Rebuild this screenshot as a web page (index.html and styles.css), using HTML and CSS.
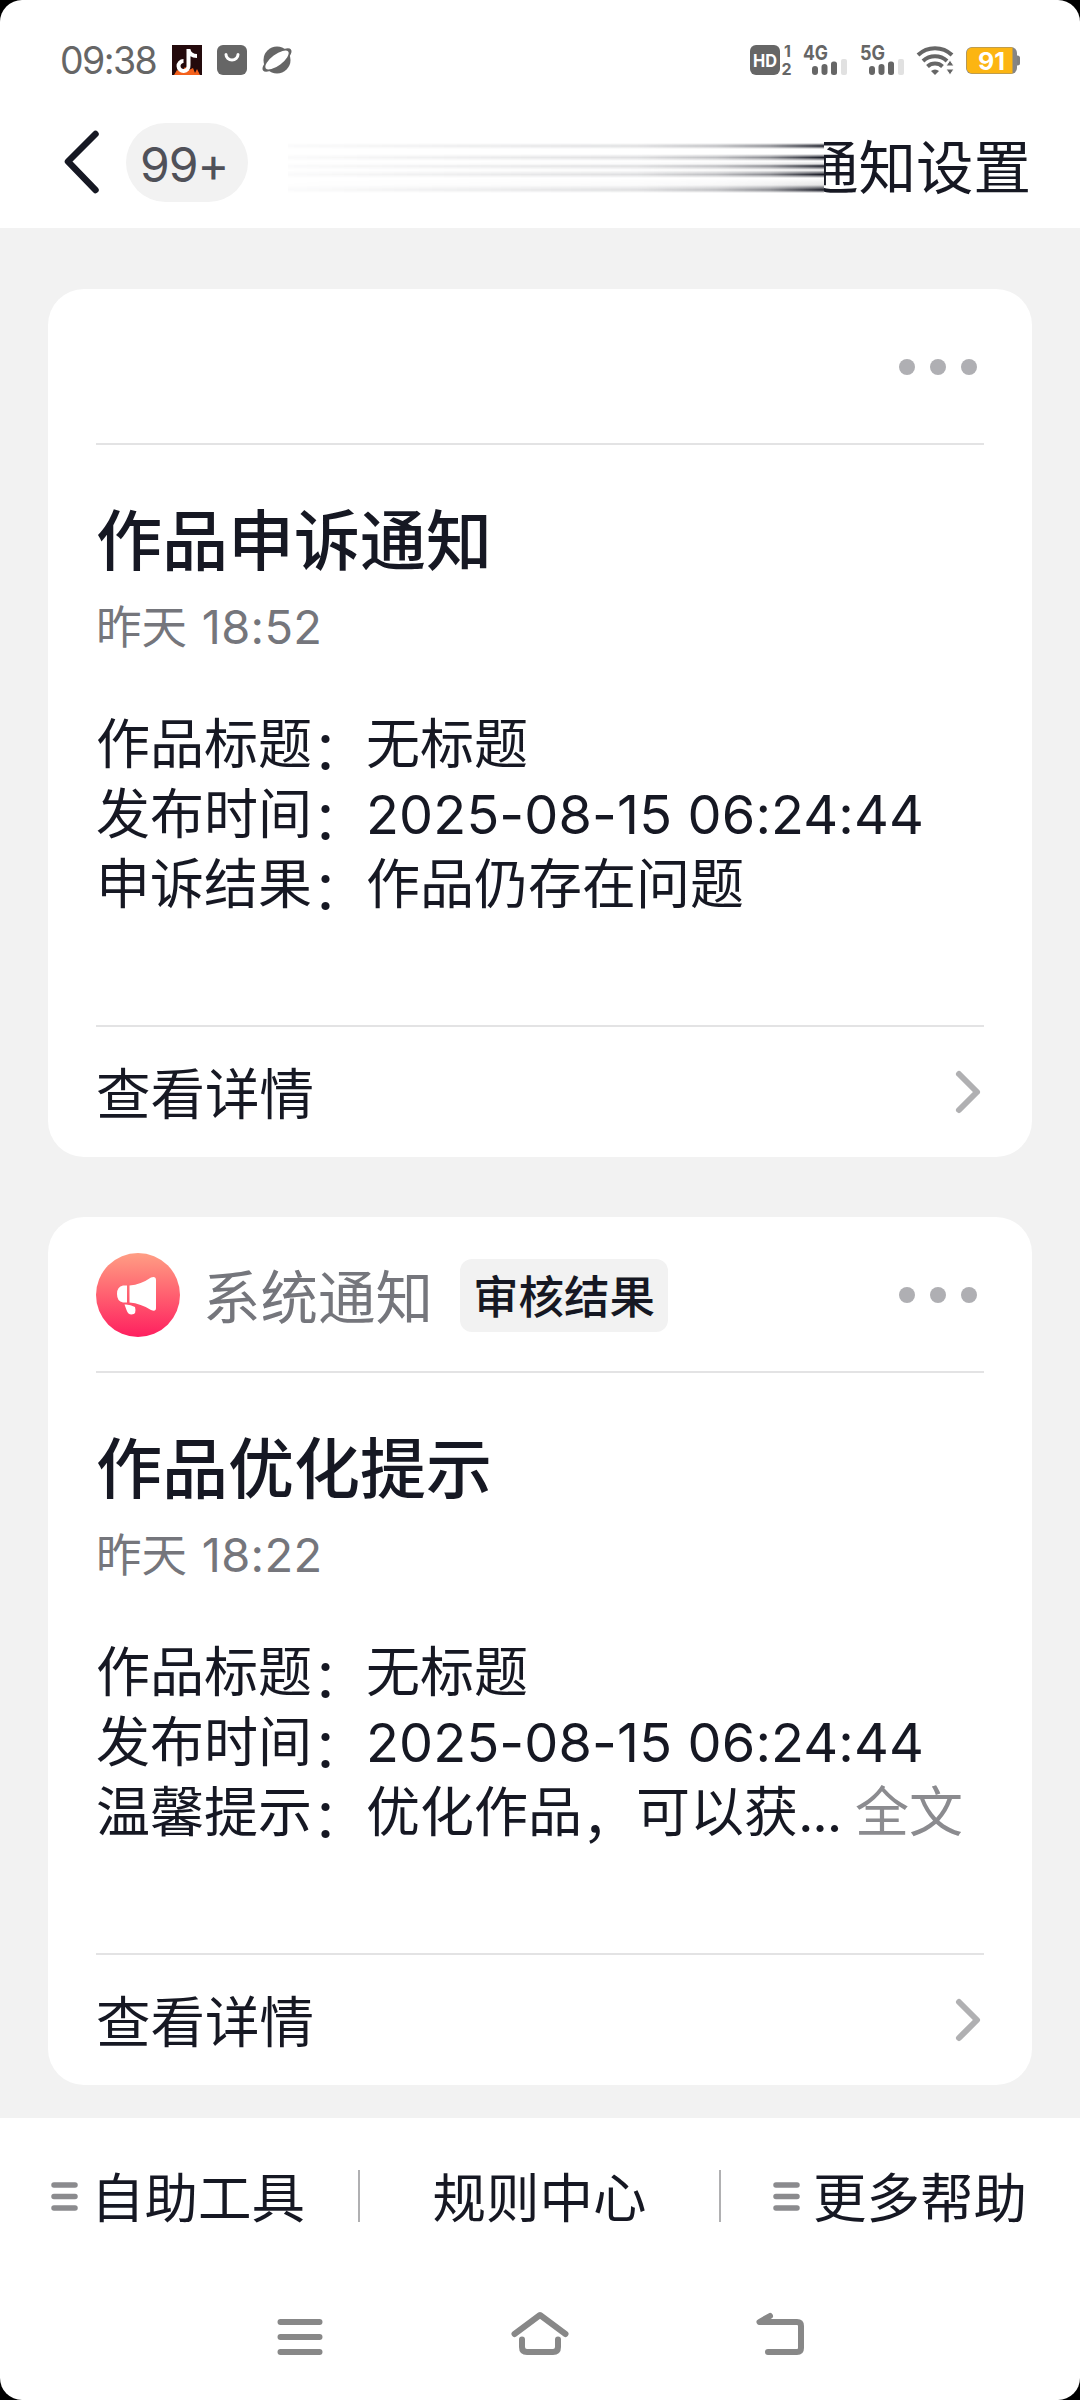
FILE: index.html
```html
<!DOCTYPE html>
<html lang="zh-CN">
<head>
<meta charset="utf-8">
<title>系统通知</title>
<link rel="stylesheet" href="styles.css">
</head>
<body>
<div class="screen">
  <div class="status">
    <div class="status-left">
      <span class="clock">09:38</span>
      <svg width="30" height="30" viewBox="0 0 30 30"><rect width="30" height="30" fill="#240a0c"/><path d="M2 30L5 25L9 27L13 22L17 25L21 23L23 28L25 24L28 30Z" fill="#f4611c"/><path d="M16.500 4V20.500A5 5 0 1 1 11.500 16M16.500 5Q18 11 25 11" fill="none" stroke="#fff" stroke-width="4"/></svg>
      <svg width="30" height="30" viewBox="0 0 30 30"><rect width="30" height="30" rx="6" fill="#666"/><path d="M9 9.500A6 5.500 0 0 0 21 9.500" fill="none" stroke="#fff" stroke-width="3" stroke-linecap="round"/></svg>
      <svg width="30" height="30" viewBox="0 0 30 30"><circle cx="15" cy="15" r="13.500" fill="#666"/><ellipse cx="15" cy="15" rx="17.500" ry="6.500" transform="rotate(-37 15 15)" fill="#666"/><ellipse cx="15" cy="15" rx="14" ry="5.500" transform="rotate(-37 15 15)" fill="#fff"/></svg>
    </div>
    <div class="status-right">
      <svg width="41" height="30" viewBox="0 0 41 30"><rect width="30" height="30" rx="6" fill="#666"/><text x="3" y="22" class="sig" textLength="24" lengthAdjust="spacingAndGlyphs" font-size="18" fill="#fff">HD</text><text x="34" y="12" class="sig" font-size="16" fill="#666">1</text><text x="31.500" y="29.500" class="sig" font-size="16" fill="#666">2</text></svg>
      <svg width="45" height="30" viewBox="0 0 45 30"><text x="0" y="15" class="sig" textLength="25" lengthAdjust="spacingAndGlyphs" font-size="20" fill="#666">4G</text><g fill="#666"><rect x="9" y="21" width="6" height="9" rx="3"/><rect x="18.500" y="19" width="6" height="11" rx="3"/><rect x="28" y="16.500" width="6" height="13.500" rx="2.500"/><rect x="38" y="14" width="6" height="16" rx="2" fill="#e1e1e1"/></g></svg>
      <svg width="45" height="30" viewBox="0 0 45 30"><text x="0" y="15" class="sig" textLength="25" lengthAdjust="spacingAndGlyphs" font-size="20" fill="#666">5G</text><g fill="#666"><rect x="9" y="21" width="6" height="9" rx="3"/><rect x="18.500" y="19" width="6" height="11" rx="3"/><rect x="28" y="16.500" width="6" height="13.500" rx="2.500"/><rect x="38" y="14" width="6" height="16" rx="2" fill="#e1e1e1"/></g></svg>
      <svg width="37" height="30" viewBox="0 0 37 30"><g fill="none" stroke="#666" stroke-width="4"><path d="M1 10A24.500 24.500 0 0 1 35 10"/><path d="M6 16A17.500 17.500 0 0 1 30 16"/><path d="M10.500 21.500A11 11 0 0 1 25.500 21.500"/></g><path d="M14 26A6 6 0 0 1 22 26L18 30Z" fill="#666"/><path d="M33 15L37 21H29ZM33 30L37 24H29Z" fill="#666" stroke="#fff" stroke-width="1"/></svg>
      <svg width="54" height="27" viewBox="0 0 54 27"><rect x="48" y="8.500" width="6" height="10" rx="2.500" fill="#808080"/><rect width="51" height="27" rx="6" fill="#858585"/><path d="M6 .6H46.500V26.400H6A5.500 5.500 0 0 1 .6 21V6A5.500 5.500 0 0 1 6 .6Z" fill="#fcb512"/><text x="12" y="22.500" class="sig" textLength="27" lengthAdjust="spacingAndGlyphs" font-size="24" fill="#fff">91</text></svg>
    </div>
  </div>

  <div class="navbar">
    <svg class="back" width="36" height="64" viewBox="0 0 36 64"><path d="M31.500 4L4 31.500L31.500 60" fill="none" stroke="#161823" stroke-width="6.500" stroke-linecap="round" stroke-linejoin="round"/></svg>
    <span class="unread">99+</span>
    <div class="trail"></div>
    <div class="setting"><span>通知设置</span></div>
  </div>

  <main class="feed">
    <section class="card">
      <header class="card-head">
        <svg class="dots" width="78" height="16" viewBox="0 0 78 16"><circle cx="8" cy="8" r="8"/><circle cx="39" cy="8" r="8"/><circle cx="70" cy="8" r="8"/></svg>
      </header>
      <h2>作品申诉通知</h2>
      <p class="date">昨天 <span class="time">18:52</span></p>
      <div class="detail">
        <p>作品标题<span class="punct">：</span>无标题</p>
        <p>发布时间<span class="punct">：</span><span class="num">2025-08-15 06:24:44</span></p>
        <p>申诉结果<span class="punct">：</span>作品仍存在问题</p>
      </div>
      <footer class="card-foot"><span>查看详情</span><svg width="24" height="42" viewBox="0 0 24 42"><path d="M3 3L21 21L3 39" fill="none" stroke="#b0b0b2" stroke-width="6" stroke-linecap="round" stroke-linejoin="round"/></svg></footer>
    </section>

    <section class="card">
      <header class="card-head">
        <svg class="avatar" width="84" height="84" viewBox="0 0 84 84"><defs><linearGradient id="g" x1="0" y1="0" x2="0" y2="1"><stop offset="0" stop-color="#ff9e84"/><stop offset=".5" stop-color="#ff6070"/><stop offset="1" stop-color="#fe1f5f"/></linearGradient></defs><circle cx="42" cy="42" r="42" fill="url(#g)"/><path d="M31 32.500V49.500H27Q21 48.500 21 41T27 32.500ZM33.500 32.500Q45 31.500 55 24.500Q60 23 60 27V55Q60 59 55 57Q45 50.500 33.500 49.500ZM28.500 51.500Q34 51 39 54Q41 61.500 35.500 61.500Q32 61.500 30.500 57Z" fill="#fff"/></svg>
        <span class="source">系统通知</span>
        <span class="tag">审核结果</span>
        <svg class="dots" width="78" height="16" viewBox="0 0 78 16"><circle cx="8" cy="8" r="8"/><circle cx="39" cy="8" r="8"/><circle cx="70" cy="8" r="8"/></svg>
      </header>
      <h2>作品优化提示</h2>
      <p class="date">昨天 <span class="time">18:22</span></p>
      <div class="detail">
        <p>作品标题<span class="punct">：</span>无标题</p>
        <p>发布时间<span class="punct">：</span><span class="num">2025-08-15 06:24:44</span></p>
        <p>温馨提示<span class="punct">：</span>优化作品<span class="punct">，</span>可以获<span class="dot3">... </span><span class="more">全文</span></p>
      </div>
      <footer class="card-foot"><span>查看详情</span><svg width="24" height="42" viewBox="0 0 24 42"><path d="M3 3L21 21L3 39" fill="none" stroke="#b0b0b2" stroke-width="6" stroke-linecap="round" stroke-linejoin="round"/></svg></footer>
    </section>
  </main>

  <div class="tools">
    <div class="tool"><svg width="27" height="30" viewBox="0 0 27 30"><path d="M3 4H24M3 15.500H24M3 27H24" stroke="#8b8b8e" stroke-width="5.500" stroke-linecap="round"/></svg><span>自助工具</span></div>
    <div class="tool plain"><span>规则中心</span></div>
    <div class="tool"><svg width="27" height="30" viewBox="0 0 27 30"><path d="M3 4H24M3 15.500H24M3 27H24" stroke="#8b8b8e" stroke-width="5.500" stroke-linecap="round"/></svg><span>更多帮助</span></div>
  </div>

  <div class="sysnav">
    <svg width="60" height="50" viewBox="0 0 60 50"><path d="M10.500 12H49.500M10.500 27H49.500M10.500 42H49.500"/></svg>
    <svg width="60" height="50" viewBox="0 0 60 50"><path d="M4.500 24L30 5L55.500 24M12 29.500V37Q12 42 17 42H43Q48 42 48 37V29.500"/></svg>
    <svg width="60" height="50" viewBox="0 0 60 50"><path d="M20 6L9.500 12H47Q51 12 51 16V38Q51 42 47 42H18"/></svg>
  </div>
</div>
</body>
</html>
```
FILE: styles.css
```css
* { box-sizing: border-box; }

body {
  margin: 0;
  background: #000;
  font-family: Inter, "Noto Sans CJK SC", sans-serif;
  color: #161823;
}

h2, p { margin: 0; }
svg { display: block; flex: none; overflow: visible; }

.screen {
  width: 1080px;
  height: 2400px;
  display: flex;
  flex-direction: column;
  background: #fff;
  border-radius: 22px;
  overflow: hidden;
}

/* status bar */
.status {
  height: 120px;
  padding: 0 60px;
  display: flex;
  align-items: center;
  justify-content: space-between;
}
.status-left { display: flex; align-items: center; gap: 15px; }
.clock {
  width: 97px;
  padding-top: 1px;
  font-size: 37.500px;
  line-height: 40px;
  letter-spacing: -1.6px;
  color: #666;
  white-space: nowrap;
}
.status-right { display: flex; align-items: center; gap: 12px; }
.sig { font-family: Inter, sans-serif; font-weight: 700; }

/* title bar */
.navbar {
  height: 108px;
  padding: 0 50px 24px 64px;
  display: flex;
  align-items: center;
}
.unread {
  width: 122px;
  height: 79px;
  margin-left: 26px;
  padding-left: 14px;
  border-radius: 40px;
  background: #f2f2f2;
  font-size: 48px;
  line-height: 83px;
  letter-spacing: -1px;
  color: #505159;
}
.trail {
  width: 536px;
  height: 54px;
  margin: 10px 0 0 40px;
  background:
    linear-gradient(transparent 3px, #161823 6px, transparent 9px,
      transparent 14px, #161823 17.500px, transparent 21px,
      rgba(22, 24, 35, .15) 24px, #161823 26px, transparent 30px,
      rgba(22, 24, 35, .2) 31px, #161823 34.500px, transparent 38px,
      rgba(22, 24, 35, .12) 45px, #161823 50px, transparent 53px);
  -webkit-mask-image: linear-gradient(90deg, rgba(0,0,0,.02), rgba(0,0,0,.08) 35%, rgba(0,0,0,.14) 65%, rgba(0,0,0,.28) 80%, rgba(0,0,0,.5) 90%, #000);
  mask-image: linear-gradient(90deg, rgba(0,0,0,.02), rgba(0,0,0,.08) 35%, rgba(0,0,0,.14) 65%, rgba(0,0,0,.28) 80%, rgba(0,0,0,.5) 90%, #000);
}
.setting {
  width: 207px;
  margin: 12px -1px 0 0;
  display: flex;
  justify-content: flex-end;
  overflow: hidden;
  font-size: 57.500px;
  line-height: 64px;
  white-space: nowrap;
}

/* notification feed */
.feed {
  height: 1890px;
  padding: 61px 48px 0;
  display: flex;
  flex-direction: column;
  gap: 60px;
  background: #f2f2f2;
}
.card {
  height: 868px;
  padding: 0 48px;
  display: flex;
  flex-direction: column;
  background: #fff;
  border-radius: 36px;
}
.card-head {
  height: 156px;
  padding-top: 2px;
  display: flex;
  align-items: center;
  border-bottom: 2px solid #e3e3e4;
}
.dots { margin: 0 7px 0 auto; fill: #afafb3; }
.source {
  margin-left: 23px;
  padding-top: 6px;
  font-size: 57.500px;
  line-height: 64px;
  color: #75767c;
}
.tag {
  width: 208px;
  height: 73px;
  margin-left: 27px;
  border-radius: 12px;
  background: #f2f2f2;
  font-size: 45.500px;
  font-weight: 500;
  line-height: 78px;
  text-align: center;
}
h2 {
  margin-top: 56px;
  font-size: 66px;
  font-weight: 500;
  line-height: 80px;
}
.date {
  margin-top: 17px;
  font-size: 45.500px;
  line-height: 60px;
  color: #75767c;
}
.time { margin-left: 2px; font-size: 47px; line-height: 1; letter-spacing: .3px; }
.detail {
  margin-top: 52px;
  font-size: 54px;
  line-height: 70px;
  white-space: nowrap;
}
.num { letter-spacing: .15px; }
.punct { line-height: 0; vertical-align: -6px; }
.dot3 { letter-spacing: -1.2px; }
.more { color: #8b8b8f; }
.card-foot {
  height: 132px;
  margin-top: auto;
  padding: 0 4px 1px 0;
  display: flex;
  align-items: center;
  justify-content: space-between;
  border-top: 2px solid #e3e3e4;
  font-size: 54.500px;
  line-height: 70px;
}
.card-foot span { padding-top: 4px; }

/* bottom shortcuts */
.tools {
  height: 158px;
  padding-bottom: 2px;
  display: grid;
  grid-template-columns: 360px 361px 359px;
  align-items: center;
  font-size: 53.500px;
  line-height: 52px;
}
.tool {
  height: 52px;
  padding-left: 51px;
  display: flex;
  align-items: center;
  gap: 13px;
  border-right: 2px solid #b0b0b2;
}
.tool span { padding-top: 6px; }
.tool:last-child { border: 0; padding-left: 52px; }
.plain { padding: 0; justify-content: center; }

/* system navigation */
.sysnav {
  height: 124px;
  padding: 34px 270px 0;
  display: flex;
  justify-content: space-between;
}
.sysnav svg {
  fill: none;
  stroke: #888;
  stroke-width: 6;
  stroke-linecap: round;
  stroke-linejoin: round;
}
```
